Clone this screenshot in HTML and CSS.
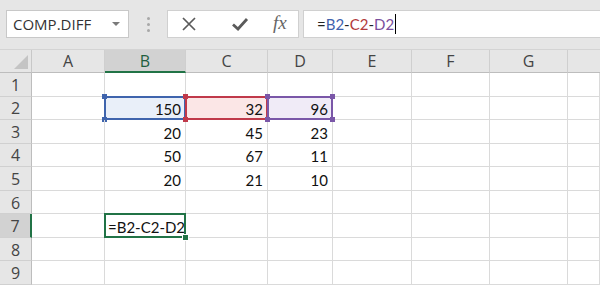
FILE: index.html
```html
<!DOCTYPE html>
<html>
<head>
<meta charset="utf-8">
<link rel="stylesheet" href="styles.css">
</head>
<body>
<div class="app">
  <div class="toolbar">
    <div class="namebox">
      <span class="name">COMP.DIFF</span>
      <svg class="caret" width="8" height="5" viewBox="0 0 8 5"><path d="M0 0 L8 0 L4 4 Z" fill="#7a7a7a"/></svg>
    </div>
    <div class="dots"><i></i><i></i><i></i></div>
    <div class="buttons">
      <svg class="btn" width="16" height="16" viewBox="0 0 16 16"><path d="M2 2 L14 14 M14 2 L2 14" stroke="#5a5a5a" stroke-width="1.7" fill="none"/></svg>
      <svg class="btn" width="18" height="16" viewBox="0 0 18 16"><path d="M2 8.5 L7 13 L16 3" stroke="#5a5a5a" stroke-width="2.8" fill="none"/></svg>
      <span class="fx">fx</span>
    </div>
    <div class="formula">
      <span class="op">=</span><span class="rb">B2</span><span class="op">-</span><span class="rc">C2</span><span class="op">-</span><span class="rd">D2</span><span class="cursor"></span>
    </div>
  </div>
  <div class="sheet">
    <div class="corner"><svg width="14" height="14" viewBox="0 0 14 14"><path d="M14 0 L14 14 L0 14 Z" fill="#c4c4c4"/></svg></div>
    <div class="ch">A</div>
    <div class="ch sel">B</div>
    <div class="ch">C</div>
    <div class="ch">D</div>
    <div class="ch">E</div>
    <div class="ch">F</div>
    <div class="ch">G</div>
    <div class="ch last"></div>

    <div class="rh">1</div><div class="c"></div><div class="c"></div><div class="c"></div><div class="c"></div><div class="c"></div><div class="c"></div><div class="c"></div><div class="c"></div>

    <div class="rh">2</div><div class="c"></div>
    <div class="c num ref ref-b">150<span class="box"><i class="tl"></i><i class="tr"></i><i class="bl"></i><i class="br"></i></span></div>
    <div class="c num ref ref-c">32<span class="box"><i class="tl"></i><i class="tr"></i><i class="bl"></i><i class="br"></i></span></div>
    <div class="c num ref ref-d">96<span class="box"><i class="tl"></i><i class="tr"></i><i class="bl"></i><i class="br"></i></span></div>
    <div class="c"></div><div class="c"></div><div class="c"></div><div class="c"></div>

    <div class="rh">3</div><div class="c"></div><div class="c num">20</div><div class="c num">45</div><div class="c num">23</div><div class="c"></div><div class="c"></div><div class="c"></div><div class="c"></div>
    <div class="rh">4</div><div class="c"></div><div class="c num">50</div><div class="c num">67</div><div class="c num">11</div><div class="c"></div><div class="c"></div><div class="c"></div><div class="c"></div>
    <div class="rh">5</div><div class="c"></div><div class="c num">20</div><div class="c num">21</div><div class="c num">10</div><div class="c"></div><div class="c"></div><div class="c"></div><div class="c"></div>
    <div class="rh">6</div><div class="c"></div><div class="c"></div><div class="c"></div><div class="c"></div><div class="c"></div><div class="c"></div><div class="c"></div><div class="c"></div>
    <div class="rh sel">7</div><div class="c"></div>
    <div class="c active">=B2-C2-D2<span class="handle"></span></div>
    <div class="c"></div><div class="c"></div><div class="c"></div><div class="c"></div><div class="c"></div><div class="c"></div>
    <div class="rh">8</div><div class="c"></div><div class="c"></div><div class="c"></div><div class="c"></div><div class="c"></div><div class="c"></div><div class="c"></div><div class="c"></div>
    <div class="rh">9</div><div class="c"></div><div class="c"></div><div class="c"></div><div class="c"></div><div class="c"></div><div class="c"></div><div class="c"></div><div class="c"></div>
  </div>
</div>
</body>
</html>
```

FILE: styles.css
```css
* { box-sizing: border-box; }
html, body { margin: 0; padding: 0; }
body { width: 600px; height: 288px; overflow: hidden; background: #fff; font-family: "Lato", "Open Sans", sans-serif; }

.app { width: 600px; height: 288px; overflow: hidden; }

.toolbar {
  height: 50px;
  background: #e6e6e6;
  display: flex;
  align-items: flex-start;
  padding: 10px 0 0 6px;
  border-bottom: 1px solid #d4d4d4;
}
.namebox {
  width: 123px; height: 28px;
  background: #fff;
  border: 1px solid #c8c8c8;
  display: flex; align-items: center; justify-content: space-between;
  padding: 0 8px 0 6px;
}
.name { font-family: "Open Sans", sans-serif; font-size: 15px; color: #333; }
.caret { margin-top: 1px; }
.dots { width: 38px; height: 28px; display: flex; flex-direction: column; align-items: center; justify-content: center; gap: 3px; }
.dots i { display: block; width: 3px; height: 3px; border-radius: 50%; background: #a8a8a8; }
.buttons {
  width: 132px; height: 28px;
  background: #fff;
  border: 1px solid #d0d0d0;
  display: flex; align-items: center;
  padding-left: 13px;
}
.buttons .btn:nth-child(1) { margin-right: 34px; }
.buttons .btn:nth-child(2) { margin-right: 24px; }
.fx { font-family: "Liberation Serif", serif; font-style: italic; font-size: 19px; color: #666; margin-top: -2px; }
.formula {
  flex: 1; height: 28px;
  margin-left: 4px;
  background: #fff;
  border: 1px solid #d0d0d0;
  border-right: none;
  display: flex; align-items: center;
  padding-left: 13px;
  font-size: 15px;
}
.op { color: #222; }
.rb { color: #3f62ad; }
.rc { color: #b23a3a; }
.rd { color: #7a4f9e; }
.cursor { display: inline-block; width: 1px; height: 20px; background: #000; margin-left: 1px; }

.sheet {
  display: grid;
  grid-template-columns: 32px 73px 81px 82px 65px 79px 78px 78px 1fr;
  grid-template-rows: 23px repeat(9, 23.56px);
}
.corner {
  background: #e6e6e6;
  border-right: 1px solid #c8c8c8;
  border-bottom: 1px solid #bdbdbd;
  display: flex; align-items: flex-end; justify-content: flex-end;
  padding: 0 3px 3px 0;
}
.ch {
  background: #e6e6e6;
  border-right: 1px solid #cfcfcf;
  border-bottom: 1px solid #bdbdbd;
  font-family: "Open Sans", sans-serif;
  font-size: 16px; color: #444;
  display: flex; align-items: center; justify-content: center;
}
.ch.sel { background: #d2d2d2; color: #1f5f3f; border-bottom: 2px solid #217346; }
.ch.last { border-right: none; }
.rh {
  background: #e6e6e6;
  border-right: 1px solid #bdbdbd;
  border-bottom: 1px solid #d0d0d0;
  font-family: "Open Sans", sans-serif;
  font-size: 16px; color: #444;
  display: flex; align-items: center; justify-content: center;
  padding-top: 1px;
}
.rh.sel { background: #d2d2d2; border-right: 2px solid #217346; }
.c {
  border-right: 1px solid #dadada;
  border-bottom: 1px solid #dadada;
  font-size: 15px; color: #111;
  display: flex; align-items: flex-end;
  padding: 0 4px 1px 3px;
  position: relative;
  white-space: nowrap;
}
.num { justify-content: flex-end; }

.ref .box {
  position: absolute; left: -1px; top: -1px; right: -1px; bottom: -1px;
  border: 2px solid;
  pointer-events: none;
}
.ref .box i { position: absolute; width: 5px; height: 5px; }
.ref .box .tl { left: -4px; top: -4px; }
.ref .box .tr { right: -4px; top: -4px; }
.ref .box .bl { left: -4px; bottom: -4px; }
.ref .box .br { right: -4px; bottom: -4px; }
.ref-b { background: #e9eff9; }
.ref-b .box { border-color: #3f64ad; }
.ref-b .box i { background: #3f64ad; }
.ref-c { background: #fbe6e6; }
.ref-c .box { border-color: #c0394a; }
.ref-c .box i { background: #c0394a; }
.ref-d { background: #f0ebf7; }
.ref-d .box { border-color: #7a57a8; }
.ref-d .box i { background: #7a57a8; }
.ref { position: relative; }
.ref-c .box, .ref-d .box { z-index: 2; }

.active { position: relative; }
.active::before {
  content: ""; position: absolute; left: -1px; top: -1px; right: -1px; bottom: -1px;
  border: 2px solid #217346;
}
.handle { position: absolute; right: -4px; bottom: -4px; width: 5px; height: 5px; background: #217346; border: 1px solid #fff; z-index: 3; box-sizing: content-box; }
```
